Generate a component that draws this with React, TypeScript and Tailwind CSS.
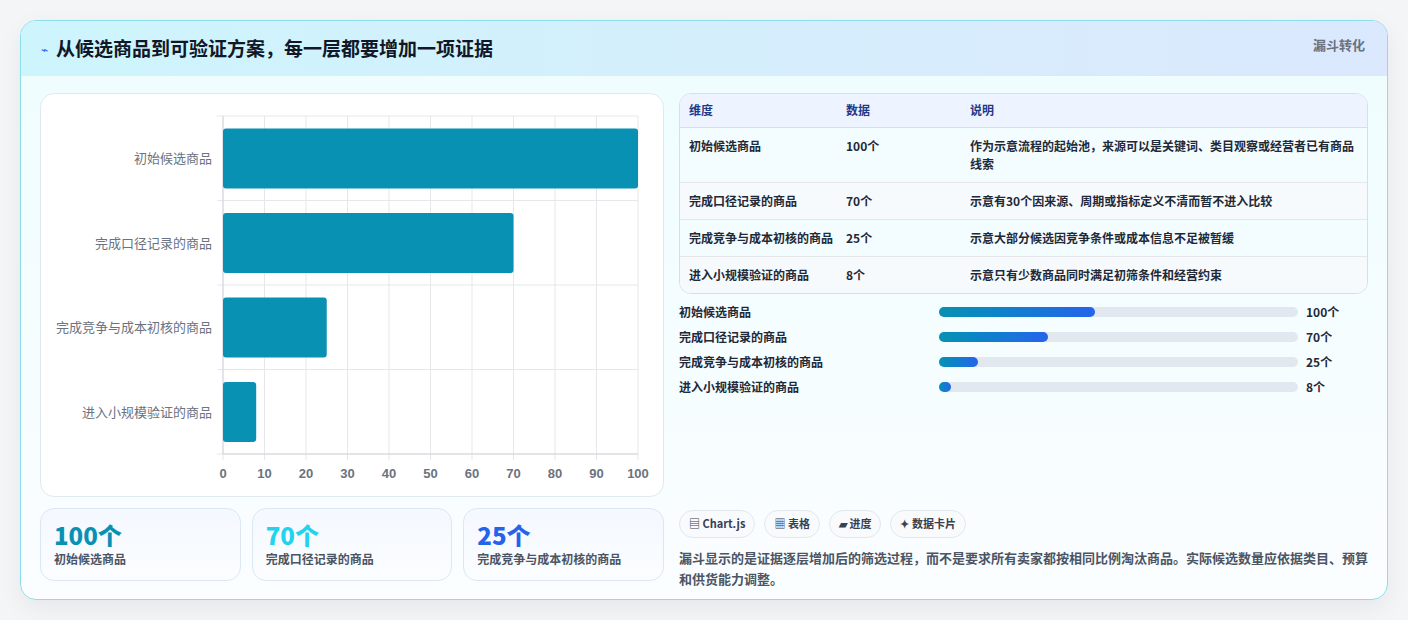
const font = { fontFamily: '"Noto Sans CJK SC", "Noto Sans", sans-serif' };

const rows = [
  { name: "初始候选商品", value: 100, note: "作为示意流程的起始池，来源可以是关键词、类目观察或经营者已有商品线索" },
  { name: "完成口径记录的商品", value: 70, note: "示意有30个因来源、周期或指标定义不清而暂不进入比较" },
  { name: "完成竞争与成本初核的商品", value: 25, note: "示意大部分候选因竞争条件或成本信息不足被暂缓" },
  { name: "进入小规模验证的商品", value: 8, note: "示意只有少数商品同时满足初筛条件和经营约束" },
];

function Chart() {
  const x0 = 182;
  const x1 = 597;
  const top = 22;
  const bottom = 360;
  const band = (bottom - top) / 4;
  const sx = (v: number) => x0 + ((x1 - x0) * v) / 100;
  return (
    <svg width="622" height="402" style={font}>
      {Array.from({ length: 11 }, (_, i) => (
        <g key={i}>
          <line x1={sx(i * 10)} x2={sx(i * 10)} y1={top} y2={bottom + 6} stroke="#e5e7eb" />
          <text x={sx(i * 10)} y={bottom + 24} textAnchor="middle" fontSize="13" fill="#6b7280" fontFamily="Liberation Sans, sans-serif" fontWeight="600">
            {i * 10}
          </text>
        </g>
      ))}
      {[0, 1, 2, 3, 4].map((i) => (
        <line key={i} x1={x0 - 6} x2={x1} y1={top + band * i} y2={top + band * i} stroke="#e5e7eb" />
      ))}
      <line x1={x0} x2={x0} y1={top} y2={bottom} stroke="#d1d5db" />
      <line x1={x0} x2={x1} y1={bottom} y2={bottom} stroke="#d1d5db" />
      {rows.map((r, i) => (
        <g key={r.name}>
          <rect x={x0} y={top + band * i + 12.5} width={sx(r.value) - x0} height={60} rx={3} fill="#0891b2" />
          <text x={x0 - 11} y={top + band * i + band / 2 + 5} textAnchor="end" fontSize="13" fill="#6b7280">
            {r.name}
          </text>
        </g>
      ))}
    </svg>
  );
}

export default function App() {
  return (
    <div className="min-h-[620px] bg-[#f4f5f7] px-[20px] pt-[20px]" style={font}>
      <div className="h-[580px] overflow-hidden rounded-[16px] border border-[#8ddcec] bg-gradient-to-b from-[#eefdff] to-[#fbfdff] shadow-[0_8px_24px_rgba(0,0,0,0.06)]">
        <div className="flex h-[55px] items-center justify-between bg-gradient-to-r from-[#cdf5fc] to-[#dbe8fd] px-[20px]">
          <div className="flex items-center gap-2">
            <span className="text-[12px] text-[#2563eb]">⌁</span>
            <h1 className="text-[19px] font-bold text-[#111827]">从候选商品到可验证方案，每一层都要增加一项证据</h1>
          </div>
          <span className="mb-[8px] mr-[2px] text-[13px] font-bold text-[#6b7280]">漏斗转化</span>
        </div>
        <div className="flex gap-[15px] px-[19px] pt-[17px]">
          <div className="flex w-[624px] flex-col gap-[11px]">
            <div className="h-[404px] rounded-[14px] border border-[#e2e8f0] bg-white">
              <Chart />
            </div>
            <div className="grid grid-cols-3 gap-[11px]">
              {[
                { v: "100个", l: "初始候选商品", c: "text-[#0891b2]" },
                { v: "70个", l: "完成口径记录的商品", c: "text-[#22d3ee]" },
                { v: "25个", l: "完成竞争与成本初核的商品", c: "text-[#2563eb]" },
              ].map((k) => (
                <div key={k.l} className="h-[73px] rounded-[14px] border border-[#dbe7f3] bg-gradient-to-b from-[#f4f8ff] to-[#fbfdff] px-[13px] pt-[11px]">
                  <div className={`text-[24px] font-extrabold leading-[30px] ${k.c}`}>{k.v}</div>
                  <div className="text-[12px] font-semibold text-[#4b5563]">{k.l}</div>
                </div>
              ))}
            </div>
          </div>
          <div className="flex flex-1 flex-col">
            <div className="overflow-hidden rounded-[12px] border border-[#d7dee8] bg-white">
              <table className="w-full text-left text-[12px] text-[#1f2937]">
                <thead className="bg-[#eef4ff] text-[#1e3a8a]">
                  <tr className="h-[33px] border-b border-[#d7dee8]">
                    <th className="w-[166px] pl-[9px] font-bold">维度</th>
                    <th className="w-[124px] font-bold">数据</th>
                    <th className="font-bold">说明</th>
                  </tr>
                </thead>
                <tbody>
                  {rows.map((r, i) => (
                    <tr key={r.name} className={`border-b border-[#e5e7eb] last:border-b-0 ${i % 2 ? "bg-[#f7fafc]" : "bg-[#f3fdff]"}`}>
                      <td className="py-[9px] pl-[9px] align-top font-semibold">{r.name}</td>
                      <td className="py-[9px] align-top font-semibold">{r.value}个</td>
                      <td className="py-[9px] pr-[10px] align-top font-semibold leading-[18px]">{r.note}</td>
                    </tr>
                  ))}
                </tbody>
              </table>
            </div>
            <div className="mt-[10px] flex flex-col gap-[9px]">
              {rows.map((r) => (
                <div key={r.name} className="flex h-[16px] items-center">
                  <span className="w-[260px] text-[12px] font-semibold text-[#1f2937]">{r.name}</span>
                  <div className="h-[10px] w-[359px] rounded-full bg-[#e2e8f0]">
                    <div className="h-full rounded-full bg-gradient-to-r from-[#0891b2] to-[#2563eb]" style={{ width: `${Math.max(r.value * 0.435, 3.2)}%` }} />
                  </div>
                  <span className="ml-[8px] text-[12px] font-bold text-[#1f2937]">{r.value}个</span>
                </div>
              ))}
            </div>
            <div className="mt-[115px] flex gap-[9px]">
              {["▤ Chart.js", "▦ 表格", "▰ 进度", "✦ 数据卡片"].map((p) => (
                <span key={p} className="flex h-[28px] items-center rounded-full border border-[#e2e8f0] bg-[#f8fafc] px-[9px] text-[11px] font-bold text-[#374151]">
                  {p}
                </span>
              ))}
            </div>
            <p className="mt-[9px] text-[13px] font-semibold leading-[21px] text-[#4b5563]">
              漏斗显示的是证据逐层增加后的筛选过程，而不是要求所有卖家都按相同比例淘汰商品。实际候选数量应依据类目、预算和供货能力调整。
            </p>
          </div>
        </div>
      </div>
    </div>
  );
}
